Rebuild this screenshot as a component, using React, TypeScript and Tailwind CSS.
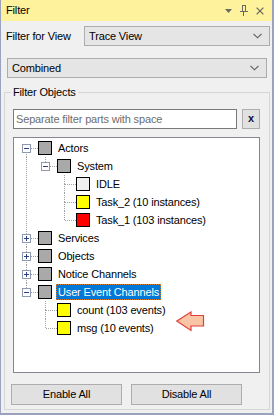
import React from 'react'

// Filter panel: a docked tool window with view selectors and an object tree.

type Row = {
  label: string
  level: number
  guides: boolean[] // ancestor columns: true = vertical line passes through
  top: boolean
  bottom: boolean
  expander?: '+' | '-'
  fill: string
  selected?: boolean
}

const rows: Row[] = [
  { label: 'Actors', level: 0, guides: [], top: false, bottom: true, expander: '-', fill: 'bg-[#a9a9a9]' },
  { label: 'System', level: 1, guides: [true], top: true, bottom: false, expander: '-', fill: 'bg-[#a9a9a9]' },
  { label: 'IDLE', level: 2, guides: [true, false], top: true, bottom: true, fill: 'bg-[#f0f0f0]' },
  { label: 'Task_2 (10 instances)', level: 2, guides: [true, false], top: true, bottom: true, fill: 'bg-[#ffff00]' },
  { label: 'Task_1 (103 instances)', level: 2, guides: [true, false], top: true, bottom: false, fill: 'bg-[#ff0000]' },
  { label: 'Services', level: 0, guides: [], top: true, bottom: true, expander: '+', fill: 'bg-[#a9a9a9]' },
  { label: 'Objects', level: 0, guides: [], top: true, bottom: true, expander: '+', fill: 'bg-[#a9a9a9]' },
  { label: 'Notice Channels', level: 0, guides: [], top: true, bottom: true, expander: '+', fill: 'bg-[#a9a9a9]' },
  { label: 'User Event Channels', level: 0, guides: [], top: true, bottom: false, expander: '-', fill: 'bg-[#a9a9a9]', selected: true },
  { label: 'count (103 events)', level: 1, guides: [false], top: true, bottom: true, fill: 'bg-[#ffff00]' },
  { label: 'msg (10 events)', level: 1, guides: [false], top: true, bottom: false, fill: 'bg-[#ffff00]' },
]

const DOT = '1 1'
const LINE = '#a0a0a0'

function GuideCell({ on }: { on: boolean }) {
  return (
    <svg width="19" height="18" className="shrink-0" shapeRendering="crispEdges">
      {on && <line x1="9.5" y1="0" x2="9.5" y2="18" stroke={LINE} strokeDasharray={DOT} />}
    </svg>
  )
}

function OwnCell({ top, bottom, expander }: { top: boolean; bottom: boolean; expander?: '+' | '-' }) {
  return (
    <svg width="21" height="18" className="shrink-0" shapeRendering="crispEdges">
      {top && <line x1="9.5" y1="0" x2="9.5" y2="9" stroke={LINE} strokeDasharray={DOT} />}
      {bottom && <line x1="9.5" y1="9" x2="9.5" y2="18" stroke={LINE} strokeDasharray={DOT} />}
      <line x1="10" y1="9.5" x2="21" y2="9.5" stroke={LINE} strokeDasharray={DOT} />
      {expander && (
        <g>
          <rect x="5.5" y="5.5" width="8" height="8" fill="#ffffff" stroke="#8f9ab0" />
          <line x1="7" y1="9.5" x2="12" y2="9.5" stroke="#2b3f8c" />
          {expander === '+' && <line x1="9.5" y1="7" x2="9.5" y2="12" stroke="#2b3f8c" />}
        </g>
      )}
    </svg>
  )
}

function TreeRow({ row }: { row: Row }) {
  return (
    <div className="flex h-[18px] items-center">
      {row.guides.map((g, i) => (
        <GuideCell key={i} on={g} />
      ))}
      <OwnCell top={row.top} bottom={row.bottom} expander={row.expander} />
      <span className={`h-[14px] w-[14px] shrink-0 border border-black ${row.fill}`} />
      <span
        className={
          row.selected
            ? 'ml-[4px] h-[16px] border border-dotted border-[#c9782e] bg-[#0078d7] px-[1px] leading-[14px] text-white'
            : 'ml-[4px] px-[2px] leading-[18px] text-black'
        }
      >
        {row.label}
      </span>
    </div>
  )
}

function Chevron() {
  return (
    <svg width="9" height="6" viewBox="0 0 9 6" className="shrink-0">
      <polyline points="0.5,0.8 4.5,4.8 8.5,0.8" fill="none" stroke="#5a5a5a" strokeWidth="1.1" />
    </svg>
  )
}

function Combo({ text, className }: { text: string; className: string }) {
  return (
    <div
      className={`flex h-[20px] items-center justify-between border border-[#adadad] bg-[#e5e5e5] pl-[4px] pr-[7px] ${className}`}
    >
      <span className="leading-[18px]">{text}</span>
      <Chevron />
    </div>
  )
}

export default function App() {
  return (
    <div
      className="flex h-[415px] w-[274px] flex-col border-b-2 border-l border-r-2 border-[#9aa2bd] bg-[#f0f0f0] text-[11px] tracking-[-0.15px] text-black"
      style={{ fontFamily: '"Liberation Sans", Arial, sans-serif' }}
    >
      {/* title bar */}
      <div className="flex h-[21px] shrink-0 items-center justify-between bg-[#fff29d] pl-[5px] pr-[8px]">
        <span className="leading-[21px]">Filter</span>
        <div className="flex items-center gap-[8px]">
          <svg width="7" height="4" viewBox="0 0 7 4">
            <polygon points="0,0 7,0 3.5,4" fill="#6a6a62" />
          </svg>
          <svg width="8" height="11" viewBox="0 0 8 11" shapeRendering="crispEdges">
            <rect x="2.5" y="0.5" width="3" height="6" fill="none" stroke="#6a6a62" />
            <line x1="5" y1="1" x2="5" y2="6" stroke="#6a6a62" />
            <line x1="0" y1="6.5" x2="8" y2="6.5" stroke="#6a6a62" />
            <line x1="3.5" y1="7" x2="3.5" y2="11" stroke="#6a6a62" />
          </svg>
          <svg width="8" height="8" viewBox="0 0 8 8">
            <path d="M0.6 0.6 L7.4 7.4 M7.4 0.6 L0.6 7.4" stroke="#6a6a62" strokeWidth="1.3" />
          </svg>
        </div>
      </div>

      {/* view selector */}
      <div className="mt-[5px] flex h-[20px] items-center">
        <span className="w-[83px] pl-[5px] leading-[20px]">Filter for View</span>
        <Combo text="Trace View" className="w-[186px]" />
      </div>

      <Combo text="Combined" className="ml-[6px] mt-[12px] w-[260px]" />

      {/* filter objects group */}
      <fieldset className="ml-[3px] mt-[7px] h-[325px] w-[266px] border border-[#d5d5d5]">
        <legend className="ml-[6px] px-[2px] leading-[14px]">Filter Objects</legend>

        <div className="ml-[8px] mt-[10px] flex h-[20px] gap-[5px]">
          <div className="flex w-[224px] items-center border border-[#7a7a7a] bg-white px-[2px]">
            <span className="leading-[18px] text-[#6d6d6d]">Separate filter parts with space</span>
          </div>
          <button
            type="button"
            className="flex w-[18px] items-center justify-center border border-[#adadad] bg-[#e1e1e1] pb-[1px] font-bold text-[#101040]"
          >
            x
          </button>
        </div>

        <div className="relative ml-[8px] mt-[8px] h-[236px] w-[247px] border border-[#828790] bg-white pl-[3px] pt-[1px]">
          {rows.map((r) => (
            <TreeRow key={r.label} row={r} />
          ))}
          {/* annotation arrow */}
          <svg width="29" height="21" viewBox="0 0 29 21" className="absolute left-[162px] top-[173px]">
            <polygon
              points="0.8,10 15,1 15,4.5 27.5,4.5 27.5,15 15,15 15,19.5"
              fill="#f9c5a7"
              stroke="#e0403a"
              strokeWidth="1.2"
              strokeLinejoin="miter"
            />
          </svg>
        </div>

        <div className="ml-[6px] mt-[11px] flex gap-[9px]">
          <button type="button" className="h-[21px] w-[111px] border border-[#adadad] bg-[#e1e1e1] leading-[19px]">
            Enable All
          </button>
          <button type="button" className="h-[21px] w-[111px] border border-[#adadad] bg-[#e1e1e1] leading-[19px]">
            Disable All
          </button>
        </div>
      </fieldset>
    </div>
  )
}
